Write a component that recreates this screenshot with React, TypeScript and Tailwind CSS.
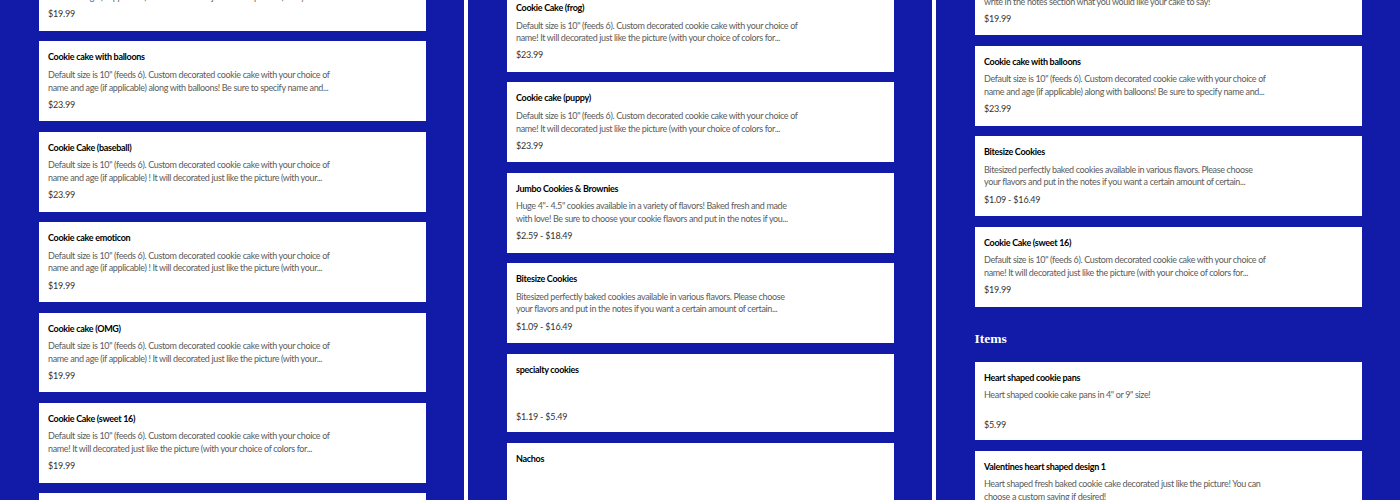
type Item = {
  name: string;
  lines: string[];
  price: string;
};

const balloons: Item = {
  name: "Cookie cake with balloons",
  lines: [
    'Default size is 10" (feeds 6). Custom decorated cookie cake with your choice of',
    "name and age (if applicable) along with balloons! Be sure to specify name and...",
  ],
  price: "$23.99",
};

const sweet16: Item = {
  name: "Cookie Cake (sweet 16)",
  lines: [
    'Default size is 10" (feeds 6). Custom decorated cookie cake with your choice of',
    "name! It will decorated just like the picture (with your choice of colors for...",
  ],
  price: "$19.99",
};

const bitesize: Item = {
  name: "Bitesize Cookies",
  lines: [
    "Bitesized perfectly baked cookies available in various flavors. Please choose",
    "your flavors and put in the notes if you want a certain amount of certain...",
  ],
  price: "$1.09 - $16.49",
};

const ageLines = [
  'Default size is 10" (feeds 6). Custom decorated cookie cake with your choice of',
  "name and age (if applicable) ! It will decorated just like the picture (with your...",
];

const MenuCard = ({ item }: { item: Item }) => (
  <div
    className={`shrink-0 bg-white pt-[10px] pl-[9.5px] pr-[10px] ${
      item.lines.length < 2 ? "pb-[9.5px]" : "pb-[10.5px]"
    }`}>
    <h3 className="text-[9px] leading-[12px] font-bold tracking-[-0.3px] text-black">{item.name}</h3>
    <div className="mt-[5.5px] h-[25.4px] text-[9px] leading-[12.7px] tracking-[-0.36px] text-[#5c5c5c]">
      {item.lines.map((line) => (
        <p key={line} className="whitespace-nowrap">{line}</p>
      ))}
    </div>
    <p className="mt-[4.5px] text-[9px] leading-[12px] tracking-[-0.2px] text-[#333333]">{item.price}</p>
  </div>
);

const Column = ({ children, offset }: { children: React.ReactNode; offset: string }) => (
  <div className="h-[500px] flex-1 overflow-hidden bg-[#121ba8] px-[38.5px]">
    <div className={`flex flex-col gap-[10.5px] ${offset}`}>{children}</div>
  </div>
);

export default function App() {
  return (
    <div className="flex h-[500px] w-[1400px] gap-[4px] overflow-hidden bg-white font-['Lato',sans-serif]">
      <Column offset="-mt-[49px]">
        <MenuCard item={{ name: "Cookie cake (age)", lines: ageLines, price: "$19.99" }} />
        <MenuCard item={balloons} />
        <MenuCard item={{ name: "Cookie Cake (baseball)", lines: ageLines, price: "$23.99" }} />
        <MenuCard item={{ name: "Cookie cake emoticon", lines: ageLines, price: "$19.99" }} />
        <MenuCard item={{ name: "Cookie cake (OMG)", lines: ageLines, price: "$19.99" }} />
        <MenuCard item={sweet16} />
        <MenuCard item={{ name: "Cookie cake", lines: ageLines, price: "$19.99" }} />
      </Column>
      <Column offset="-mt-[8px]">
        <MenuCard item={{ name: "Cookie Cake (frog)", lines: sweet16.lines, price: "$23.99" }} />
        <MenuCard item={{ name: "Cookie cake (puppy)", lines: sweet16.lines, price: "$23.99" }} />
        <MenuCard
          item={{
            name: "Jumbo Cookies & Brownies",
            lines: [
              'Huge 4"- 4.5" cookies available in a variety of flavors! Baked fresh and made',
              "with love! Be sure to choose your cookie flavors and put in the notes if you...",
            ],
            price: "$2.59 - $18.49",
          }}
        />
        <MenuCard item={bitesize} />
        <MenuCard item={{ name: "specialty cookies", lines: [], price: "$1.19 - $5.49" }} />
        <MenuCard item={{ name: "Nachos", lines: [], price: "$4.99" }} />
      </Column>
      <Column offset="-mt-[44.5px]">
        <MenuCard
          item={{
            name: "Cookie cake",
            lines: [
              'Default size is 10" (feeds 6). Custom decorated cookie cake with your choice,',
              "write in the notes section what you would like your cake to say!",
            ],
            price: "$19.99",
          }}
        />
        <MenuCard item={balloons} />
        <MenuCard item={bitesize} />
        <MenuCard item={sweet16} />
        <h2 className="mt-[12px] mb-[2px] font-['Liberation_Serif',serif] text-[13.5px] leading-[20px] font-bold text-white">
          Items
        </h2>
        <MenuCard
          item={{
            name: "Heart shaped cookie pans",
            lines: ['Heart shaped cookie cake pans in 4" or 9" size!'],
            price: "$5.99",
          }}
        />
        <MenuCard
          item={{
            name: "Valentines heart shaped design 1",
            lines: [
              "Heart shaped fresh baked cookie cake decorated just like the picture! You can",
              "choose a custom saying if desired!",
            ],
            price: "$19.99",
          }}
        />
      </Column>
    </div>
  );
}
